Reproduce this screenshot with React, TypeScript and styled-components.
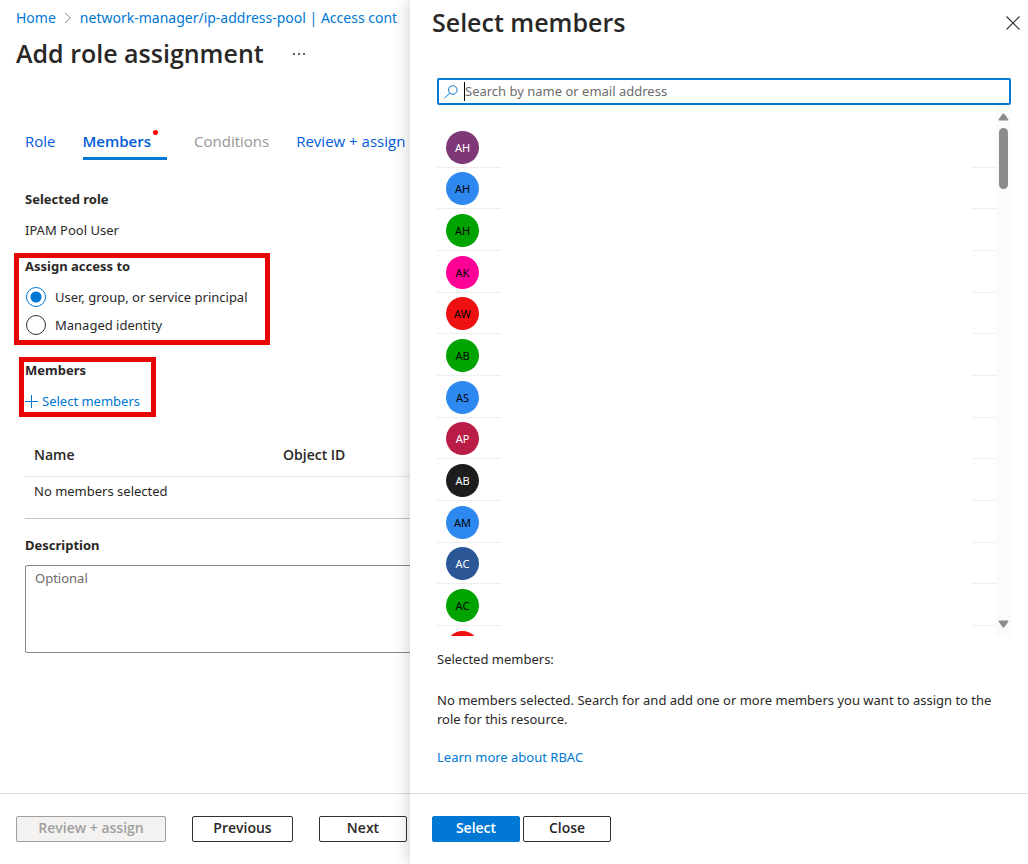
import React, { useState } from "react";
import styled, { createGlobalStyle } from "styled-components";

const uiFont = `"Open Sans", "Segoe UI", sans-serif`;

const GlobalStyle = createGlobalStyle`
  *, *::before, *::after { box-sizing: border-box; }
  body {
    margin: 0;
    background: #fff;
    color: #292827;
    font-family: "Noto Sans", "Segoe UI", sans-serif;
    font-size: 13px;
    line-height: 20px;
  }
  h1, h2, p { margin: 0; }
  button, input, textarea { font: inherit; color: inherit; }
`;

const Screen = styled.div`
  display: grid;
  grid-template-columns: 410px minmax(0, 1fr);
  min-height: 100vh;
  overflow: hidden;
`;

const Page = styled.main`
  display: flex;
  flex-direction: column;
  min-width: 0;
  overflow: hidden;
  white-space: nowrap;
`;

const Breadcrumb = styled.nav`
  display: flex;
  align-items: center;
  gap: 8px;
  padding: 8px 0 0 16px;
  font-size: 14px;

  svg { flex: none; }
`;

const Link = styled.a`
  color: #0078d4;
  text-decoration: none;
`;

const TitleRow = styled.div`
  display: flex;
  align-items: center;
  gap: 28px;
  height: 50px;
  padding-left: 16px;
`;

const Title = styled.h1`
  font-family: ${uiFont};
  font-size: 25px;
  line-height: 34px;
  font-weight: 600;
`;

const IconButton = styled.button`
  display: flex;
  padding: 0;
  border: 0;
  background: none;
`;

const Tabs = styled.nav`
  display: flex;
  align-items: flex-start;
  gap: 27px;
  margin-top: 54px;
  padding-left: 25px;
  font-family: ${uiFont};
  font-size: 15px;
  line-height: 18px;
`;

const Tab = styled.a<{ $active?: boolean; $disabled?: boolean }>`
  position: relative;
  height: 28px;
  padding-right: ${(p) => (p.$active ? 16 : 0)}px;
  border-bottom: ${(p) => (p.$active ? "3px solid #0078d4" : "0")};
  color: ${(p) => (p.$disabled ? "#979593" : "#015cda")};
  font-weight: ${(p) => (p.$active ? 600 : 400)};
  text-decoration: none;
`;

const RequiredDot = styled.span`
  position: absolute;
  top: -2px;
  right: 9px;
  width: 5px;
  height: 5px;
  border-radius: 50%;
  background: #f00;
`;

const Form = styled.form`
  display: flex;
  flex: 1;
  flex-direction: column;
  align-items: flex-start;
  width: 620px;
  padding: 31px 0 24px 25px;
`;

const Label = styled.div`
  font-size: 13px;
  line-height: 16px;
  font-weight: 700;
`;

const Value = styled.p`
  margin-top: 13px;
  padding-bottom: 1px;
`;

const Highlight = styled.fieldset<{ $inset: number; $width: number }>`
  display: flex;
  flex-direction: column;
  align-items: flex-start;
  width: ${(p) => p.$width}px;
  min-width: 0;
  margin: 12px 0 0 ${(p) => -5 - p.$inset}px;
  padding: 0 0 1px ${(p) => p.$inset}px;
  border: 5px solid #e80505;
`;

const RadioLabel = styled.label`
  display: flex;
  align-items: center;
  gap: 9px;
  height: 28px;
`;

const RadioGroup = styled.div`
  padding-top: 9px;
`;

const Radio = styled.input`
  appearance: none;
  width: 20px;
  height: 20px;
  margin: 0 0 0 1px;
  border: 1px solid #323130;
  border-radius: 50%;

  &:checked {
    border-color: #0078d4;
    background: radial-gradient(circle, #0078d4 5px, #fff 6px);
  }
`;

const AddButton = styled.button`
  display: flex;
  align-items: center;
  gap: 4px;
  margin-top: 13px;
  padding: 0;
  border: 0;
  background: none;
  color: #0078d4;
`;

const Table = styled.table`
  width: 100%;
  margin-top: 18px;
  border-collapse: collapse;
  table-layout: fixed;
  text-align: left;

  th {
    height: 41px;
    padding: 0 9px;
    border-bottom: 1px solid #e6e6e6;
    font-family: ${uiFont};
    font-size: 14px;
    font-weight: 600;
  }
  th:first-child { width: 249px; }
  td {
    height: 42px;
    padding: 4px 9px;
    border-bottom: 1px solid #c4c4c4;
    vertical-align: top;
  }
`;

const AreaLabel = styled(Label)`
  margin-top: 18px;
`;

const Area = styled.textarea`
  width: 100%;
  height: 88px;
  margin-top: 12px;
  padding: 2px 9px;
  border: 1px solid #8a8886;
  border-radius: 2px;
  resize: none;

  &::placeholder { color: #6e6c6a; }
`;

const Footer = styled.footer<{ $gap: number; $start: number }>`
  display: flex;
  gap: ${(p) => p.$gap}px;
  height: 71px;
  padding: 22px 0 0 ${(p) => p.$start}px;
  border-top: 1px solid #dcdcdc;
`;

const Button = styled.button<{ $width: number; $primary?: boolean }>`
  flex: none;
  width: ${(p) => p.$width}px;
  height: 26px;
  padding: 0 0 2px;
  border: 1px solid ${(p) => (p.$primary ? "#0078d4" : "#323130")};
  border-radius: 2px;
  background: ${(p) => (p.$primary ? "#0078d4" : "#fff")};
  color: ${(p) => (p.$primary ? "#fff" : "#292827")};
  font-family: ${uiFont};
  font-size: 14px;
  font-weight: 600;

  &:disabled {
    border-color: #a19f9d;
    background: #f3f2f1;
    color: #a19f9d;
  }
`;

const Panel = styled.aside`
  z-index: 1;
  display: flex;
  flex-direction: column;
  min-width: 0;
  background: #fff;
  box-shadow: 0 0 16px rgba(0, 0, 0, 0.22);
`;

const PanelHeader = styled.header`
  display: flex;
  align-items: center;
  justify-content: space-between;
  height: 46px;
  padding: 0 8px 2px 22px;
`;

const PanelBody = styled.div`
  display: flex;
  flex: 1;
  flex-direction: column;
  min-height: 0;
  padding: 32px 17px 0 27px;
`;

const SearchBox = styled.label`
  display: flex;
  align-items: center;
  height: 27px;
  padding-left: 5px;
  border: 2px solid #0078d4;
  border-radius: 2px;
`;

const Caret = styled.span`
  width: 1px;
  height: 19px;
  margin-left: 5px;
  background: #000;
`;

const SearchInput = styled.input`
  flex: 1;
  min-width: 0;
  height: 22px;
  padding: 0 0 2px;
  border: 0;
  outline: 0;
  background: none;

  &::placeholder { color: #6e6c6a; }
`;

const ListArea = styled.div`
  display: flex;
  height: 531px;
  overflow: hidden;
`;

const PeopleList = styled.ul`
  display: grid;
  flex: 1;
  grid-template-rows: repeat(12, 1fr);
  grid-auto-rows: 42px;
  height: 542px;
  margin: 21px 0 0;
  padding: 0;
  list-style: none;
`;

const Person = styled.li`
  display: flex;
  justify-content: space-between;
`;

const PersonStart = styled.div`
  display: flex;
  align-items: flex-end;
  width: 64px;
  padding: 0 0 3px 9px;
  border-bottom: 1px solid #efeeed;
`;

const PersonEnd = styled.div`
  width: 24px;
  border-bottom: 1px solid #efeeed;
`;

const Avatar = styled.span<{ $color: string; $light?: boolean }>`
  width: 33px;
  height: 33px;
  border-radius: 50%;
  background: ${(p) => p.$color};
  color: ${(p) => (p.$light ? "#fff" : "#000")};
  font-size: 11px;
  line-height: 33px;
  text-align: center;
`;

const ScrollTrack = styled.div`
  display: flex;
  flex-direction: column;
  align-items: center;
  width: 15px;
  padding: 8px 0;
  background: #fbfbfb;
`;

const ScrollThumb = styled.div`
  width: 9px;
  height: 61px;
  margin: 7px 0 auto;
  border-radius: 5px;
  background: #8b8b8b;
`;

const SelectedNote = styled.p`
  margin-top: 13px;
`;

const HelpNote = styled.p`
  margin: 22px 0 18px;
  line-height: 19px;
`;

const people = [
  { initials: "AH", color: "#7e3878", light: true },
  { initials: "AH", color: "#2d89ef" },
  { initials: "AH", color: "#00a300" },
  { initials: "AK", color: "#ff0097" },
  { initials: "AW", color: "#ee1111" },
  { initials: "AB", color: "#00a300" },
  { initials: "AS", color: "#2d89ef" },
  { initials: "AP", color: "#b91d47", light: true },
  { initials: "AB", color: "#1d1d1d", light: true },
  { initials: "AM", color: "#2d89ef" },
  { initials: "AC", color: "#2b5797", light: true },
  { initials: "AC", color: "#00a300" },
  { initials: "", color: "#ee1111" },
];

const Arrow = ({ down }: { down?: boolean }) => (
  <svg width="11" height="8" viewBox="0 0 11 8" fill="#8b8b8b">
    <path d={down ? "M1 .5h9q.8.5.3 1.3L6.5 7q-1 1-2 0L.7 1.8Q.2 1 1 .5z" : "M1 7.5h9q.8-.5.3-1.3L6.5 1q-1-1-2 0L.7 6.2Q.2 7 1 7.5z"} />
  </svg>
);

export default function App() {
  const [target, setTarget] = useState("principal");
  return (
    <>
      <GlobalStyle />
      <Screen>
        <Page>
          <Breadcrumb aria-label="Breadcrumb">
            <Link href="#home">Home</Link>
            <svg width="8" height="12" viewBox="0 0 8 12" fill="none" stroke="#8a8886">
              <path d="M1 1l5.5 5L1 11" />
            </svg>
            <Link href="#access">network-manager/ip-address-pool | Access cont</Link>
          </Breadcrumb>
          <TitleRow>
            <Title>Add role assignment</Title>
            <IconButton type="button" aria-label="More">
              <svg width="14" height="6" viewBox="0 0 14 6" fill="#605e5c">
                <path d="M1 3h2v2H1zM6 3h2v2H6zM11 3h2v2h-2z" />
              </svg>
            </IconButton>
          </TitleRow>
          <Tabs>
            <Tab href="#role">Role</Tab>
            <Tab href="#members" $active>
              Members
              <RequiredDot />
            </Tab>
            <Tab href="#conditions" $disabled>Conditions</Tab>
            <Tab href="#review">Review + assign</Tab>
          </Tabs>
          <Form>
            <Label>Selected role</Label>
            <Value>IPAM Pool User</Value>
            <Highlight $inset={6} $width={256} aria-label="Assign access to">
              <Label>Assign access to</Label>
              <RadioGroup>
                <RadioLabel>
                  <Radio type="radio" name="target" checked={target === "principal"} onChange={() => setTarget("principal")} />
                  User, group, or service principal
                </RadioLabel>
                <RadioLabel>
                  <Radio type="radio" name="target" checked={target === "identity"} onChange={() => setTarget("identity")} />
                  Managed identity
                </RadioLabel>
              </RadioGroup>
            </Highlight>
            <Highlight $inset={1} $width={137} aria-label="Members">
              <Label>Members</Label>
              <AddButton type="button">
                <svg width="13" height="13" viewBox="0 0 13 13" stroke="#0078d4">
                  <path d="M6.5 0v13M0 6.5h13" />
                </svg>
                Select members
              </AddButton>
            </Highlight>
            <Table>
              <thead>
                <tr>
                  <th scope="col">Name</th>
                  <th scope="col">Object ID</th>
                </tr>
              </thead>
              <tbody>
                <tr>
                  <td colSpan={2}>No members selected</td>
                </tr>
              </tbody>
            </Table>
            <AreaLabel as="label" htmlFor="description">Description</AreaLabel>
            <Area id="description" placeholder="Optional" />
          </Form>
          <Footer $gap={26} $start={16}>
            <Button type="button" $width={150} disabled>Review + assign</Button>
            <Button type="button" $width={101}>Previous</Button>
            <Button type="button" $width={88}>Next</Button>
          </Footer>
        </Page>
        <Panel aria-label="Select members">
          <PanelHeader>
            <Title as="h2">Select members</Title>
            <IconButton type="button" aria-label="Close panel">
              <svg width="14" height="16" viewBox="0 0 14 16" stroke="#323130" strokeWidth="1.1">
                <path d="M.5 2.5l13 13M13.5 2.5l-13 13" />
              </svg>
            </IconButton>
          </PanelHeader>
          <PanelBody>
            <SearchBox>
              <svg width="15" height="14" viewBox="0 0 15 14" fill="none" stroke="#0078d4">
                <circle cx="8.8" cy="5" r="4.3" />
                <path d="M5.7 8.2L.3 13.4" />
              </svg>
              <Caret />
              <SearchInput type="text" aria-label="Search by name or email address" placeholder="Search by name or email address" />
            </SearchBox>
            <ListArea>
              <PeopleList>
                {people.map((person, i) => (
                  <Person key={i}>
                    <PersonStart>
                      <Avatar $color={person.color} $light={person.light}>{person.initials}</Avatar>
                    </PersonStart>
                    <PersonEnd />
                  </Person>
                ))}
              </PeopleList>
              <ScrollTrack>
                <Arrow />
                <ScrollThumb />
                <Arrow down />
              </ScrollTrack>
            </ListArea>
            <SelectedNote>Selected members:</SelectedNote>
            <HelpNote>
              No members selected. Search for and add one or more members you want to assign to the role for this resource.
            </HelpNote>
            <Link href="#rbac">Learn more about RBAC</Link>
          </PanelBody>
          <Footer $gap={3} $start={22}>
            <Button type="button" $width={88} $primary>Select</Button>
            <Button type="button" $width={88}>Close</Button>
          </Footer>
        </Panel>
      </Screen>
    </>
  );
}
